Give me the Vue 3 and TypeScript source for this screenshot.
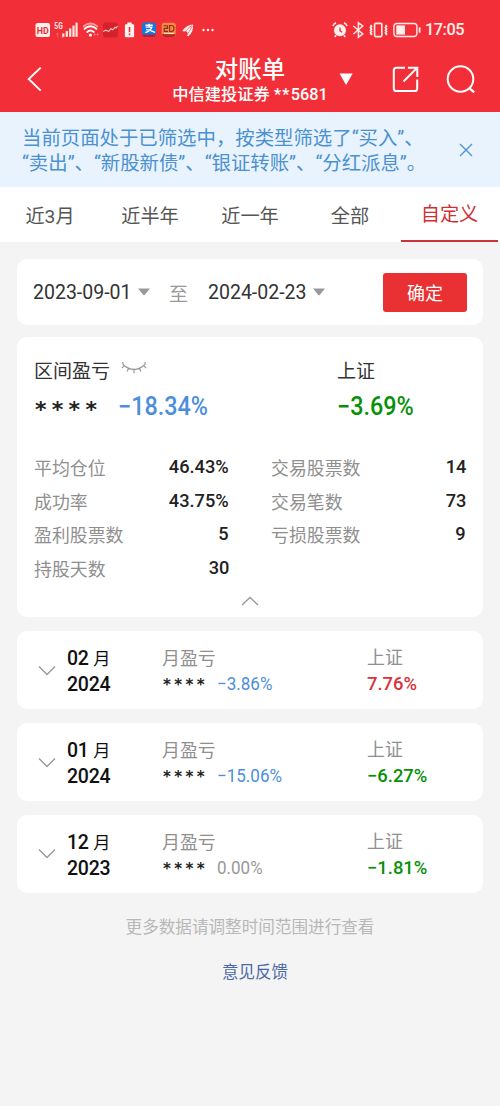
<script setup lang="ts">
interface Stat { label: string; value: string }
interface Month { month: string; year: string; profit: string; tone: string; index: string; indexTone: string }

const tabs: string[] = ['近3月', '近半年', '近一年', '全部', '自定义']
const leftStats: Stat[] = [
  { label: '平均仓位', value: '46.43%' },
  { label: '成功率', value: '43.75%' },
  { label: '盈利股票数', value: '5' },
  { label: '持股天数', value: '30' },
]
const rightStats: Stat[] = [
  { label: '交易股票数', value: '14' },
  { label: '交易笔数', value: '73' },
  { label: '亏损股票数', value: '9' },
]
const months: Month[] = [
  { month: '02', year: '2024', profit: '−3.86%', tone: 'blue', index: '7.76%', indexTone: 'red' },
  { month: '01', year: '2024', profit: '−15.06%', tone: 'blue', index: '−6.27%', indexTone: 'green' },
  { month: '12', year: '2023', profit: '0.00%', tone: 'gray', index: '−1.81%', indexTone: 'green' },
]
</script>

<template>
  <div class="page">
    <header class="header">
      <div class="status">
        <svg class="status-left" width="190" height="24" viewBox="30 18 190 24">
          <rect x="35.5" y="23" width="14.5" height="14" rx="2" fill="#fff0ee" />
          <text x="42.7" y="33.8" text-anchor="middle" font-size="9.5" font-weight="700" fill="#e8303a" textLength="12" lengthAdjust="spacingAndGlyphs">HD</text>
          <text x="54.3" y="28.8" font-size="8.5" font-weight="700" fill="#ffe9e7" textLength="8.5" lengthAdjust="spacingAndGlyphs">5G</text>
          <text x="55" y="36.5" font-size="5" fill="#ff9a9a">↑↓</text>
          <g fill="#ffe9e7">
            <rect x="62.2" y="33.5" width="2.2" height="3.3" /><rect x="65.7" y="31" width="2.2" height="5.8" />
            <rect x="69.1" y="28.4" width="2.2" height="8.4" /><rect x="72.4" y="25.6" width="2.2" height="11.2" />
            <rect x="75.5" y="22.6" width="2.1" height="14.2" />
          </g>
          <g fill="none" stroke-linecap="round" stroke-width="1.9">
            <path d="M83.8 26.2Q90.5 20.8 97.2 26.2" stroke="#ff9d9d" />
            <path d="M84.6 28.8Q90.5 23.8 96.4 28.8M87.2 31.9Q90.5 29.2 93.8 31.9" stroke="#fff" />
          </g>
          <circle cx="90.5" cy="35" r="1.6" fill="#fff" />
          <path d="M94 34.5h1.5m1.3 0h1.5" stroke="#ff9a9a" stroke-width="1.5" />
          <rect x="103" y="22.5" width="15" height="15" rx="3" fill="#d3222b" />
          <path d="M103.2 31.4l2.6-1.2 3 1.2 2.2-2.7 1.6 1.1 2.4-2.5 1 .8 1.6-2" fill="none" stroke="#ffc7bb" stroke-width="1.1" />
          <path d="M127.3 22.6h4.4v1.6h1.4q1 0 1 1v11q0 1-1 1h-7.2q-1 0-1-1v-11q0-1 1-1h1.4z" fill="#fff4f2" />
          <path d="M129.5 27v5.2m0 1.4v1.7" stroke="#e8303a" stroke-width="1.6" />
          <rect x="142" y="22.5" width="14" height="12.6" rx="2.5" fill="#1678db" />
          <path d="M142.5 34.6h13v.8q-1 1.6-3 1.6h-7q-2 0-3-1.6z" fill="#af2145" />
          <path d="M145.5 25.2h7.2m-3.6-1.4v3.3m-3.4 0h6.2q-1.5 4-6.5 5.5m.6-3q4 .3 9 2.7" fill="none" stroke="#fff" stroke-width="1.4" />
          <rect x="161.7" y="22.7" width="14" height="14.3" rx="2.5" fill="#f78a41" />
          <path d="M162 34h13.5q0 3-2.5 3h-8.5q-2.5 0-2.5-3z" fill="#b92829" />
          <path d="M163.6 25.7h4v2.7h-3.4v3h3.8M169.6 25.5h2q2.4 0 2.4 3t-2.6 3h-1.8z" fill="none" stroke="#8a2823" stroke-width="1.1" />
          <path d="M164 33.5h10" stroke="#ffe0b8" stroke-width="1.2" />
          <path d="M182.3 30.8Q186.6 24.6 193 24.4q.8 7.2-4.6 11.8l-1.4-.4q1.2-1.8.5-3.4-1.3-1.9-3.7-.8z" fill="#fff2ef" />
          <path d="M184.8 32.1q3-4.4 7.4-6.7M187.4 34.2q2.8-4 4.9-8" fill="none" stroke="#f12f38" stroke-width=".6" />
          <g fill="#fff2ef"><circle cx="203.5" cy="30" r="1.2" /><circle cx="208" cy="30" r="1.2" /><circle cx="212.5" cy="30" r="1.2" /></g>
        </svg>
        <svg class="status-right" width="92" height="24" viewBox="330 18 92 24" fill="none" stroke="#ffeae7">
          <circle cx="340" cy="30.3" r="6" fill="#fff0ed" stroke="none" />
          <path d="M333 26q.7-2.4 3-3.2M344 22.8q2.3.8 3 3.2M336 35.2l-1.2 1.7m9.2-1.7 1.2 1.7" stroke-width="1.7" />
          <path d="M340 27.4v3.4l2 1.4" stroke="#e8303a" stroke-width="1.3" />
          <path d="M353.4 26l9.4 8-4.4 3.2V22.8l4.4 3.2-9.4 8" stroke-width="1.5" />
          <rect x="374.6" y="23.4" width="7.2" height="13.2" rx="1" stroke-width="1.6" />
          <path d="M370.5 25l1 1.3-1 1.3 1 1.3-1 1.3 1 1.3-1 1.3 1 1.3-.7 1M385.5 25l1 1.3-1 1.3 1 1.3-1 1.3 1 1.3-1 1.3 1 1.3-.7 1" stroke-width="1.8" />
          <rect x="393.9" y="23.5" width="23" height="13" rx="3" stroke-width="1.4" />
          <path d="M396.3 25.4h8.7v9.2h-8.7z" fill="#fff0ed" stroke="none" />
          <path d="M419.6 27.3v5.4" stroke-width="1.8" />
        </svg>
        <span class="clock">17:05</span>
      </div>
      <div class="nav">
        <svg class="back" width="20" height="28" viewBox="25 65 20 28"><path d="M40.7 67.6 28.7 79l12 11.6" fill="none" stroke="#fff" stroke-width="1.9" /></svg>
        <div class="titles">
          <div class="title">对账单</div>
          <div class="subtitle">中信建投证券 <span class="tiny-stars">**</span>5681</div>
        </div>
        <svg class="nav-icons" width="144" height="36" viewBox="334 61 144 36" fill="none" stroke="#fff" stroke-width="2">
          <path d="M339.5 73.5h13.2l-6.6 11.6z" fill="#fff" stroke="none" />
          <path d="M405 67.8h-8.6q-2.6 0-2.6 2.6v18q0 2.6 2.6 2.6h18.2q2.6 0 2.6-2.6V79.5" />
          <path d="M403.5 81.5 416.6 68.4M408 67.7h9.3v9.4" />
          <circle cx="460.5" cy="79" r="12.8" /><path d="m469.6 88.3 4.6 4" stroke-width="2.2" />
        </svg>
      </div>
    </header>

    <section class="notice">
      <p class="notice-text">当前页面处于已筛选中，按类型筛选了“买入”、<br>“卖出”、“新股新债”、“银证转账”、“分红派息”。</p>
      <svg width="14" height="14" viewBox="0 0 14 14"><path d="m1 1 12 12M13 1 1 13" stroke="#4b91cf" stroke-width="1.3" /></svg>
    </section>

    <nav class="tabs">
      <div v-for="(tab, i) in tabs" :key="tab" class="tab" :class="{ active: i === 4 }">{{ tab }}</div>
    </nav>

    <main class="content">
      <section class="card range">
        <span class="date">2023-09-01</span>
        <svg class="caret" width="12" height="8" viewBox="0 0 12 8"><path d="M0 .5h12L6.7 7q-.7.7-1.4 0z" fill="#999" /></svg>
        <span class="to">至</span>
        <span class="date">2024-02-23</span>
        <svg class="caret" width="12" height="8" viewBox="0 0 12 8"><path d="M0 .5h12L6.7 7q-.7.7-1.4 0z" fill="#999" /></svg>
        <button class="confirm">确定</button>
      </section>

      <section class="card summary">
        <div class="overview">
          <div class="overview-main">
            <div class="heading">区间盈亏
              <svg class="eye" width="26" height="14" viewBox="0 0 26 14" fill="none" stroke="#999" stroke-width="1.2"><path d="M2 3.5Q13 13.5 24 3.5M3.4 4.6.8 7.2M2.1 3.6 1.8 1M7.6 7.4 6 10.5M13 8.6v3.6M18.4 7.4l1.6 3.1M22.6 4.6l2.6 2.6M23.9 3.6l.3-2.6" /></svg>
            </div>
            <div class="big-row"><span class="stars">****</span><span class="big blue">−18.34%</span></div>
          </div>
          <div>
            <div class="heading">上证</div>
            <div class="big-row"><span class="big green">−3.69%</span></div>
          </div>
        </div>
        <div class="stats">
          <div class="column">
            <div v-for="s in leftStats" :key="s.label" class="stat"><span>{{ s.label }}</span><b>{{ s.value }}</b></div>
          </div>
          <div class="column">
            <div v-for="s in rightStats" :key="s.label" class="stat"><span>{{ s.label }}</span><b>{{ s.value }}</b></div>
          </div>
        </div>
        <svg class="collapse" width="18" height="10" viewBox="0 0 18 10"><path d="m1 9 8-7.5L17 9" fill="none" stroke="#999" stroke-width="1.4" /></svg>
      </section>

      <section v-for="m in months" :key="m.month" class="card month">
        <svg class="expand" width="18" height="11" viewBox="0 0 18 11"><path d="m1 1.5 8 8 8-8" fill="none" stroke="#999" stroke-width="1.4" /></svg>
        <div class="period"><div>{{ m.month }} <span class="unit">月</span></div><div>{{ m.year }}</div></div>
        <div class="profit">
          <div class="caption">月盈亏</div>
          <div class="figure"><span class="stars small">****</span><span class="percent" :class="m.tone">{{ m.profit }}</span></div>
        </div>
        <div class="index">
          <div class="caption">上证</div>
          <div class="figure strong" :class="m.indexTone">{{ m.index }}</div>
        </div>
      </section>
    </main>

    <footer class="footer">
      <div class="hint">更多数据请调整时间范围进行查看</div>
      <div class="feedback">意见反馈</div>
    </footer>
  </div>
</template>

<style>
body { margin: 0; background: #f4f4f4; }
</style>

<style scoped>
* { box-sizing: border-box; }
.page { width: 500px; height: 1106px; overflow: hidden; background: #f4f4f4; color: #222; font-family: Roboto, "Noto Sans CJK SC", sans-serif; white-space: nowrap; }
.header { height: 112px; background: #f22f38; color: #fff; }
.status { display: flex; align-items: center; height: 60px; padding-left: 30px; }
.status-right { margin-left: 110px; }
.clock { margin-left: 3px; font-size: 16.3px; font-weight: 500; line-height: 24px; letter-spacing: -.45px; color: #ffefed; }
.nav { display: grid; grid-template-columns: 140px 220px 140px; height: 52px; }
.back { margin: 5px 0 0 25px; }
.titles { text-align: center; }
.title { height: 22px; margin-top: -1px; line-height: 22px; font-size: 23.5px; font-weight: 500; }
.subtitle { height: 20px; margin-top: 4px; line-height: 20px; font-size: 16.3px; font-weight: 500; }
.tiny-stars { letter-spacing: 1.2px; }
.nav-icons { margin: 1px 0 0 -26px; }
.notice { display: flex; align-items: center; height: 75px; padding-left: 22px; background: #e9f3fe; color: #4b91cf; }
.notice-text { width: 437px; margin: 3px 0 0; font-size: 19.4px; line-height: 25.5px; }
.tabs { display: grid; grid-template-columns: repeat(5, 100px); height: 54.5px; background: #fff; color: #555; }
.tab { height: 54.5px; text-align: center; font-size: 19.2px; line-height: 59px; }
.tab.active { width: 97px; margin-left: 1px; line-height: 56px; color: #cf3036; border-bottom: 2.5px solid #cc3338; }
.content { padding: 17.8px 17px 0; }
.card { background: #fff; border-radius: 10px; }
.range { display: flex; align-items: center; height: 66px; padding: 0 16px; margin-bottom: 12px; }
.date { width: 99px; font-size: 19.5px; line-height: 24px; color: #333; margin-top: 2px; }
.caret { margin-left: 6px; }
.to { margin: 0 20px 0 19px; font-size: 19px; color: #999; width: 19px; }
.confirm { width: 84px; height: 39px; margin-left: auto; padding: 0; border: 0; border-radius: 3px; background: #e93033; color: #fff; font: 400 18px "Noto Sans CJK SC", sans-serif; }
.summary { height: 280px; padding: 19.5px 17px 0; margin-bottom: 14px; }
.overview { display: flex; height: 94px; }
.overview-main { width: 303px; }
.heading { display: flex; align-items: center; height: 26px; font-size: 19px; color: #333; }
.eye { margin: -3px 0 0 11px; }
.big-row { display: flex; align-items: center; height: 47px; }
.stars { width: 84px; padding-left: 1px; font: 700 22px/24px "DejaVu Sans", sans-serif; letter-spacing: 5.3px; color: #222; transform: translateY(4px); }
.big { font-size: 25px; font-weight: 500; transform: scaleX(.935); transform-origin: left; }
.stats { display: flex; gap: 42px; }
.column { width: 195px; }
.stat { display: flex; justify-content: space-between; align-items: center; height: 33.4px; font-size: 17.9px; color: #8f8f8f; }
.stat b { font-size: 18.8px; font-weight: 500; color: #222; transform: scaleX(.97); transform-origin: right; }
.collapse { display: block; margin: 12px auto 0; }
.month { display: flex; height: 78px; padding: 15px 0 0 21px; margin-bottom: 13.8px; }
.expand { margin-top: 18.5px; }
.period { width: 95px; margin-left: 11px; font-size: 19.5px; line-height: 25px; font-weight: 500; color: #111; letter-spacing: -.25px; }
.unit { font-size: 17.2px; font-weight: 400; }
.profit { width: 205px; }
.caption { height: 25px; font-size: 17.9px; line-height: 25px; color: #8f8f8f; }
.index .caption { line-height: 24px; }
.index .figure { line-height: 25px; }
.figure { display: flex; height: 25px; font-size: 18.4px; line-height: 26px; }
.percent { transform: scaleX(.925); transform-origin: left; }
.strong { font-weight: 500; }
.stars.small { width: 55px; font-size: 15px; line-height: 25px; letter-spacing: 3.4px; transform: translateY(2px); }
.blue { color: #4b8fdc; }
.green { color: #079107; }
.red { color: #d83338; }
.gray { color: #999; }
.footer { padding-top: 9.5px; text-align: center; }
.hint { font-size: 16.6px; line-height: 24px; color: #b8b8b8; }
.feedback { padding-left: 10px; margin-top: 21px; font-size: 16.5px; line-height: 24px; color: #4a69a9; }
</style>
